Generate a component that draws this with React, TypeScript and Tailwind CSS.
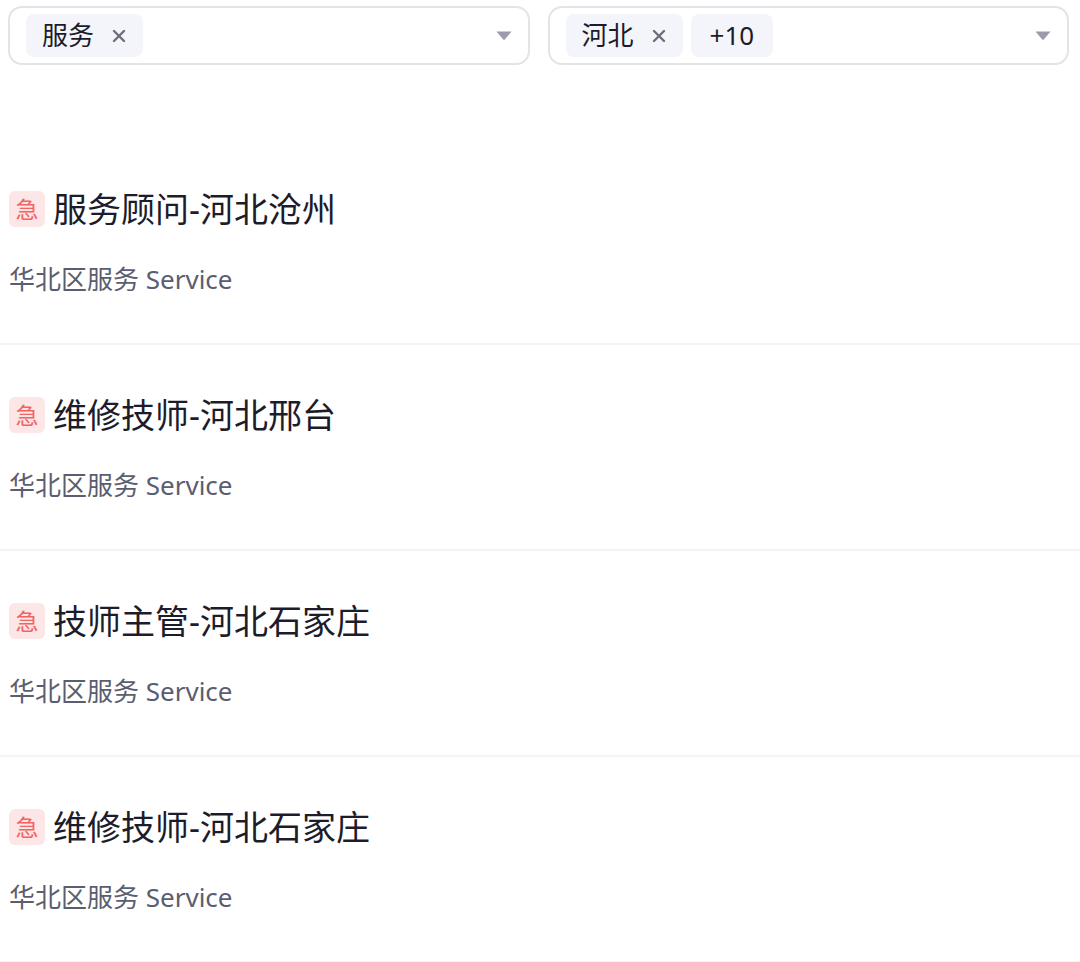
const jobs = [
  { id: 1, title: "服务顾问-河北沧州", dept: "华北区服务 Service" },
  { id: 2, title: "维修技师-河北邢台", dept: "华北区服务 Service" },
  { id: 3, title: "技师主管-河北石家庄", dept: "华北区服务 Service" },
  { id: 4, title: "维修技师-河北石家庄", dept: "华北区服务 Service" },
];

const font = "font-['Noto_Sans','Noto_Sans_CJK_SC',sans-serif]";

const Close = () => (
  <svg width="14" height="14" viewBox="0 0 14 14" className="text-[#6b6f7b]">
    <path d="M2 2L12 12M12 2L2 12" stroke="currentColor" strokeWidth="2.4" strokeLinecap="round" />
  </svg>
);

const Caret = () => (
  <svg width="16" height="9" viewBox="0 0 16 9" className="text-[#9b9bab]">
    <path d="M0.5 0.5H15.5L9 8.2Q8 9.2 7 8.2Z" fill="currentColor" />
  </svg>
);

const Tag = ({ label, closable = true }: { label: string; closable?: boolean }) => (
  <div
    className={`flex h-[43px] items-center gap-[18px] rounded-lg bg-[#f3f5fa] text-[26px] text-[#1c1c28] ${
      closable ? "pl-4 pr-[17px]" : "px-[19px]"
    }`}
  >
    <span>{label}</span>
    {closable && <Close />}
  </div>
);

const Select = ({ children }: { children: React.ReactNode }) => (
  <div className="flex h-[59px] flex-1 items-center justify-between rounded-[14px] border-2 border-[#e4e4e8] pl-4 pr-[16px]">
    <div className="flex items-center gap-2">{children}</div>
    <Caret />
  </div>
);

export default function App() {
  return (
    <div className={`${font} min-h-[962px] bg-white`}>
      <div className="flex gap-[18px] pl-2 pr-[11px] pt-[6px]">
        <Select>
          <Tag label="服务" />
        </Select>
        <Select>
          <Tag label="河北" />
          <Tag label="+10" closable={false} />
        </Select>
      </div>
      <div className="mt-[74px]">
        {jobs.map((job) => (
          <div key={job.id} className="border-b-2 border-[#f4f4f6] px-[9px] pt-[49px] pb-[51px]">
            <div className="flex h-[42px] items-center gap-2">
              <span className="flex h-9 w-9 items-center justify-center rounded-md bg-[#fde6e6] text-[23px] text-[#f26464]">
                急
              </span>
              <span className="text-[34px] leading-none text-[#1c1c2b]">{job.title}</span>
            </div>
            <div className="mt-[36px] h-[26px] text-[26px] leading-none text-[#5b5d70]">{job.dept}</div>
          </div>
        ))}
      </div>
    </div>
  );
}
